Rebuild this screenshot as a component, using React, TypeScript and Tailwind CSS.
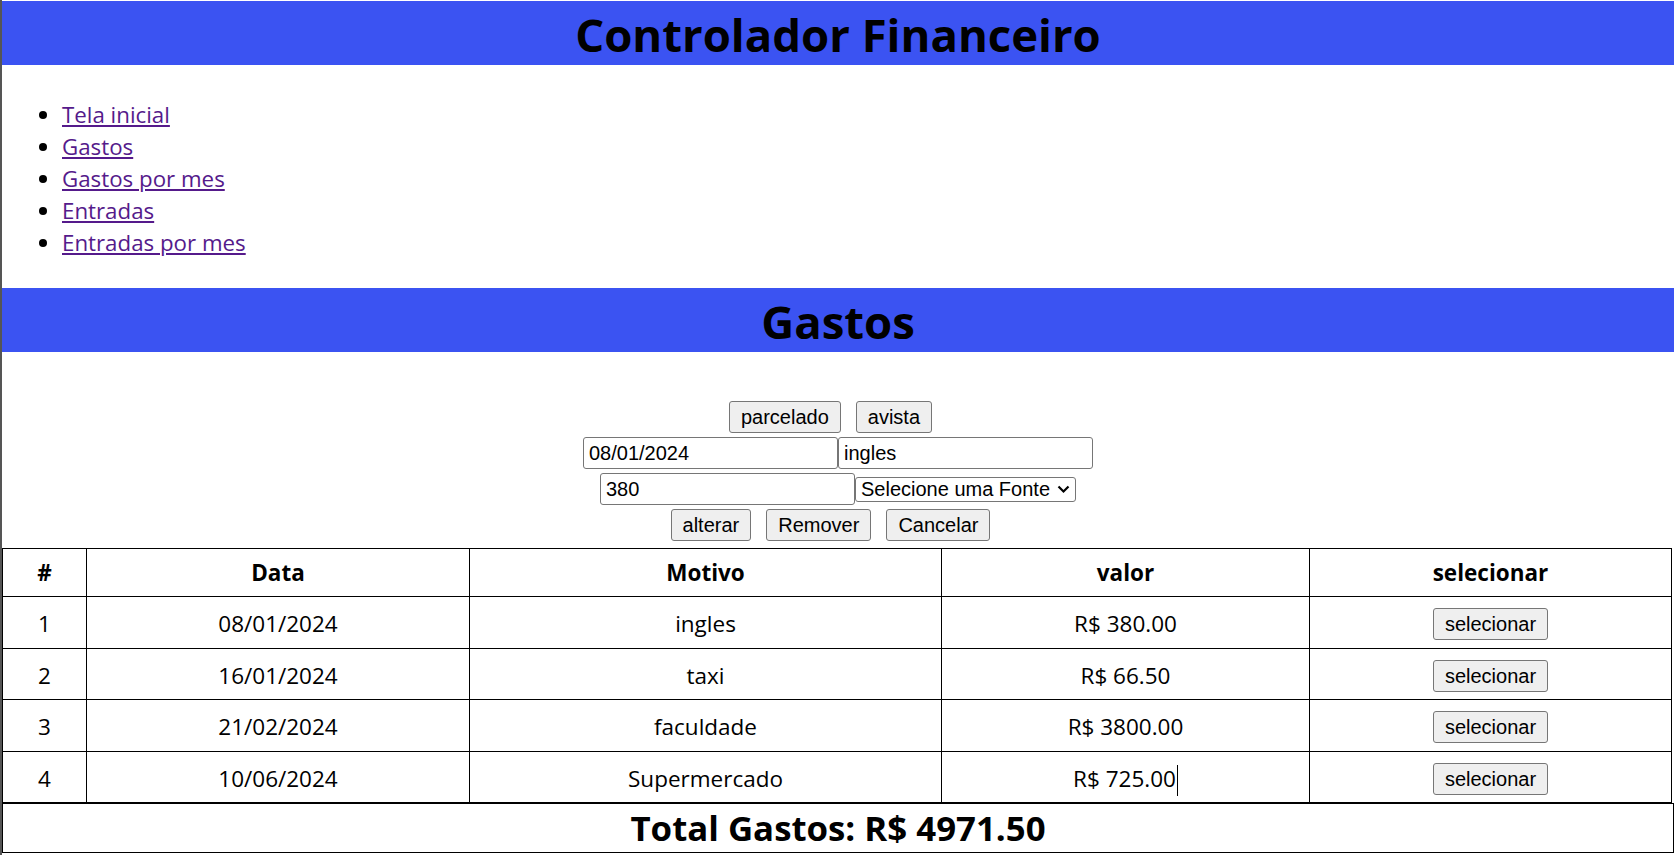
const links = ["Tela inicial", "Gastos", "Gastos por mes", "Entradas", "Entradas por mes"];

type Gasto = {
  id: number;
  data: string;
  motivo: string;
  valor: string;
};

const gastos: Gasto[] = [
  { id: 1, data: "08/01/2024", motivo: "ingles", valor: "R$ 380.00" },
  { id: 2, data: "16/01/2024", motivo: "taxi", valor: "R$ 66.50" },
  { id: 3, data: "21/02/2024", motivo: "faculdade", valor: "R$ 3800.00" },
  { id: 4, data: "10/06/2024", motivo: "Supermercado", valor: "R$ 725.00" },
];

const btn =
  "h-[32px] px-[11px] bg-[#efefef] border border-[#767676] rounded-[3px] text-[20px] leading-none text-black font-['Liberation_Sans',Arial,sans-serif]";
const input =
  "h-[32px] w-[255px] px-[5px] bg-white border border-[#767676] rounded-[3px] text-[20px] text-black outline-none font-['Liberation_Sans',Arial,sans-serif]";

const App = () => {
  return (
    <div className="min-h-screen bg-white border-l-2 border-[#555555] pt-px text-black font-['Open_Sans','Noto_Sans',sans-serif]">
      {/* Header */}
      <h1 className="h-[64px] bg-[#3b53f2] pt-[3px] text-center text-[45.5px] font-bold leading-[61px]">
        Controlador Financeiro
      </h1>

      {/* Nav */}
      <ul className="list-disc pl-[60px] mt-[34px] mb-[29px] text-[22.3px] leading-[32px]">
        {links.map((l) => (
          <li key={l}>
            <a href="#" className="text-[#551a8b] underline">
              {l}
            </a>
          </li>
        ))}
      </ul>

      <h1 className="h-[64px] bg-[#3b53f2] pt-[3px] text-center text-[45.5px] font-bold leading-[61px]">
        Gastos
      </h1>

      {/* Form */}
      <div className="mt-[47px] flex flex-col">
        <div className="flex h-[36px] items-center justify-center">
          <button className={`${btn} mr-[15px]`}>parcelado</button>
          <button className={`${btn} mr-[15px]`}>avista</button>
        </div>
        <div className="flex h-[36px] items-center justify-center">
          <input className={input} defaultValue="08/01/2024" />
          <input className={input} defaultValue="ingles" />
        </div>
        <div className="flex h-[36px] items-center justify-center">
          <input className={input} defaultValue="380" />
          <div className="flex h-[25px] w-[221px] items-center justify-between rounded-[3px] border border-[#767676] bg-white pl-[5px] pr-[5px] text-[20px] font-['Liberation_Sans',Arial,sans-serif]">
            <span>Selecione uma Fonte</span>
            <svg width="13" height="9" viewBox="0 0 13 9" fill="none">
              <path d="M1.5 1.5 L6.5 6.5 L11.5 1.5" stroke="black" strokeWidth="2.2" />
            </svg>
          </div>
        </div>
        <div className="flex h-[36px] items-center justify-center">
          <button className={`${btn} mr-[15px]`}>alterar</button>
          <button className={`${btn} mr-[15px]`}>Remover</button>
          <button className={`${btn} mr-[15px]`}>Cancelar</button>
        </div>
      </div>

      {/* Table */}
      <table className="mt-[5px] w-[1670px] border-collapse text-[22.5px]">
        <thead>
          <tr className="h-[48px]">
            <th className="w-[84px] border border-black font-bold">#</th>
            <th className="w-[383px] border border-black font-bold">Data</th>
            <th className="w-[472px] border border-black font-bold">Motivo</th>
            <th className="w-[368px] border border-black font-bold">valor</th>
            <th className="border border-black font-bold">selecionar</th>
          </tr>
        </thead>
        <tbody>
          {gastos.map((g) => (
            <tr key={g.id} className="h-[51.5px]">
              <td className="border border-black pt-[4px] text-center">{g.id}</td>
              <td className="border border-black pt-[4px] text-center">{g.data}</td>
              <td className="border border-black pt-[4px] text-center">{g.motivo}</td>
              <td className="border border-black pt-[4px] text-center">
                {g.valor}
                {g.id === 4 && <span className="ml-px inline-block h-[31px] w-px bg-black align-middle" />}
              </td>
              <td className="border border-black pt-[2px] text-center">
                <button className={`${btn} h-[31px]`}>selecionar</button>
              </td>
            </tr>
          ))}
        </tbody>
      </table>

      {/* Total */}
      <div className="flex h-[50px] items-center justify-center border border-black text-[34.8px] font-bold">
        Total Gastos: R$ 4971.50
      </div>
    </div>
  );
};

export default App;
